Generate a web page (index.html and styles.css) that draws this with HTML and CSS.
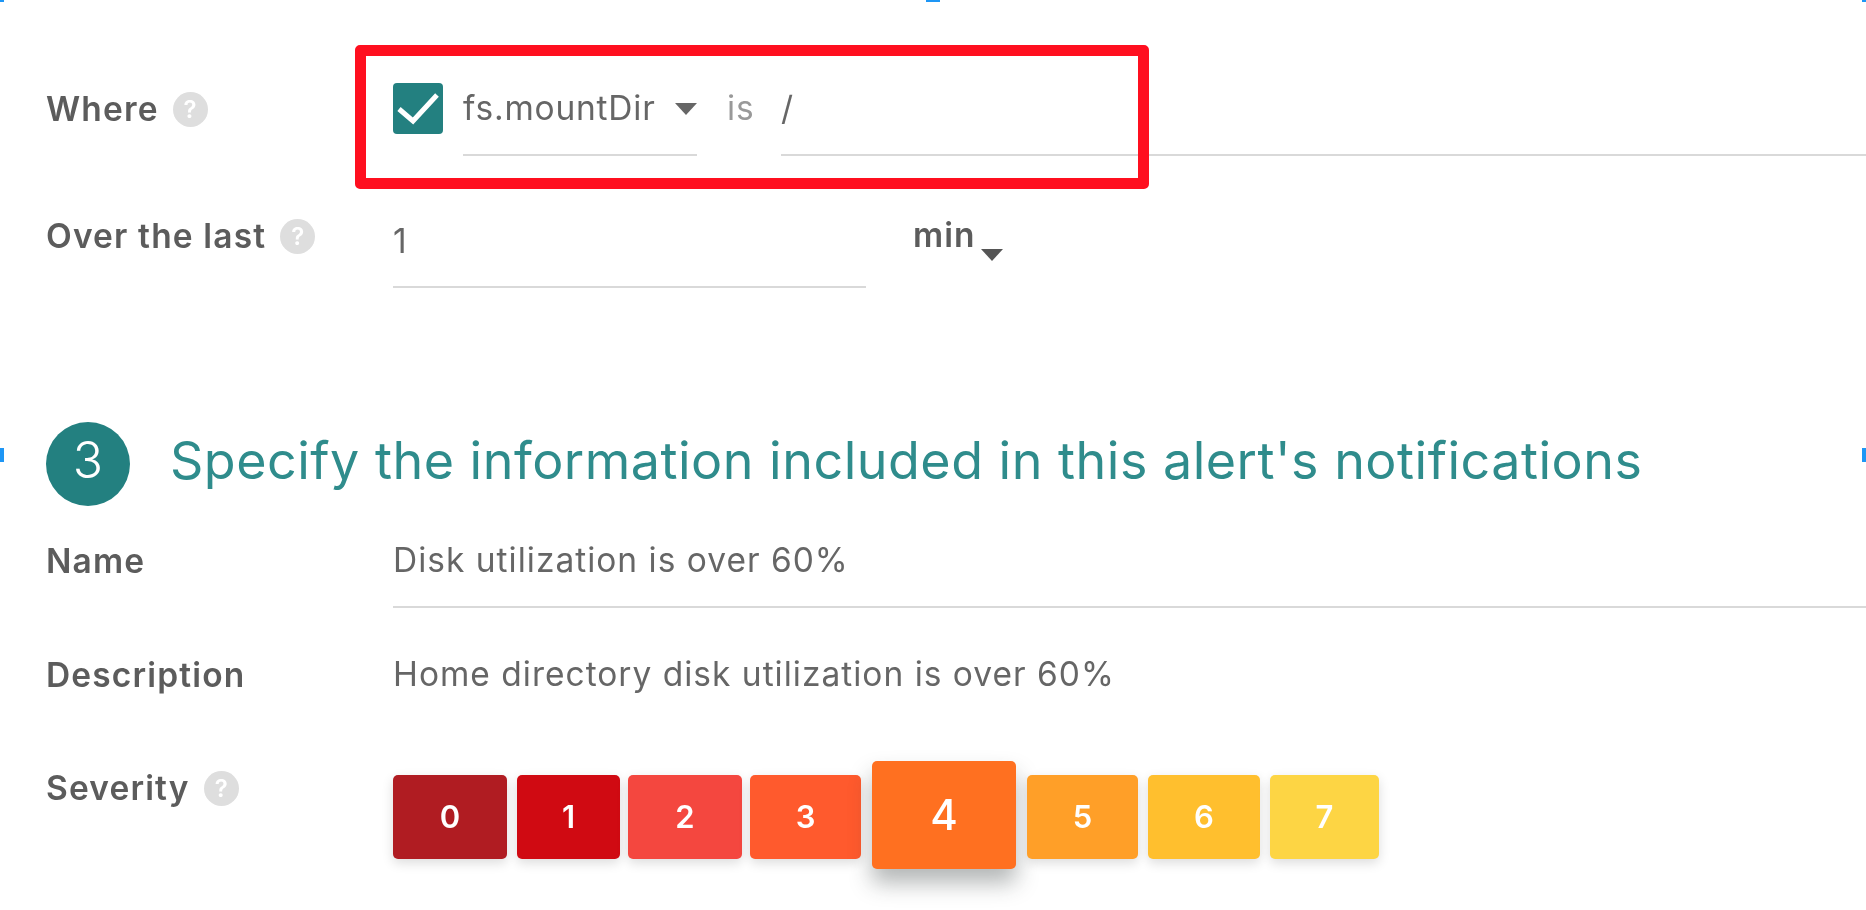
FILE: index.html
```html
<!DOCTYPE html>
<html lang="en">
<head>
<meta charset="utf-8">
<title>Alert form</title>
<link rel="stylesheet" href="styles.css">
</head>
<body>
<span class="handle handle-tl"></span>
<span class="handle handle-tc"></span>
<span class="handle handle-tr"></span>
<span class="handle handle-ml"></span>
<span class="handle handle-mr"></span>
<main class="page">
  <div class="row row-where">
    <div class="label">Where<span class="help">?</span></div>
    <div class="condition">
      <span class="checkbox">
        <svg viewBox="0 0 50 50" width="50" height="50"><path d="M6 26 L20 38 L44 12" fill="none" stroke="#fff" stroke-width="5"/></svg>
      </span>
      <div class="field field-key"><span>fs.mountDir</span><i class="caret caret-key"></i></div>
      <span class="op">is</span>
      <div class="field field-value">/</div>
    </div>
  </div>
  <div class="row row-over">
    <div class="label">Over the last<span class="help">?</span></div>
    <div class="field field-window">1</div>
    <div class="unit">min<i class="caret caret-unit"></i></div>
  </div>
  <div class="section">
    <span class="step">3</span>
    <h2 class="section-title">Specify the information included in this alert's notifications</h2>
  </div>
  <div class="row row-name">
    <div class="label">Name</div>
    <div class="field field-grow">Disk utilization is over 60%</div>
  </div>
  <div class="row row-desc">
    <div class="label">Description</div>
    <div class="plain">Home directory disk utilization is over 60%</div>
  </div>
  <div class="row row-sev">
    <div class="label">Severity<span class="help">?</span></div>
    <div class="severity">
      <span class="sev sev-0">0</span>
      <span class="sev sev-1">1</span>
      <span class="sev sev-2">2</span>
      <span class="sev sev-3">3</span>
      <span class="sev sev-4">4</span>
      <span class="sev sev-5">5</span>
      <span class="sev sev-6">6</span>
      <span class="sev sev-7">7</span>
    </div>
  </div>
</main>
<div class="highlight"></div>
</body>
</html>
```
FILE: styles.css
```css
* { box-sizing: border-box; }
html, body { margin: 0; height: 100%; overflow: hidden; background: #fff; }
body {
  position: relative;
  font-family: Inter, "Open Sans", sans-serif;
  font-size: 33.5px;
  letter-spacing: 1px;
  color: #666;
}
.page { padding: 88px 0 0 46px; filter: blur(.5px); }
.row { display: flex; align-items: flex-start; }
.label {
  flex: none;
  width: 347px;
  display: flex;
  align-items: center;
  height: 41px;
  padding-top: 1px;
  margin-bottom: -1px;
  font-weight: 600;
  letter-spacing: 1.15px;
  color: #5c5c5c;
}
.help {
  flex: none;
  width: 35px;
  height: 35px;
  margin-left: 14px;
  border-radius: 50%;
  background: #dedede;
  color: #fff;
  font-size: 24px;
  font-weight: 600;
  letter-spacing: 0;
  line-height: 35px;
  text-align: center;
}
.field {
  line-height: 40px;
  padding-bottom: 26px;
  border-bottom: 2px solid #d9d9d9;
}
.condition { flex: 1; display: flex; align-items: flex-start; }
.checkbox {
  flex: none;
  width: 50px;
  height: 51px;
  margin: -5px 20px 0 0;
  border-radius: 4px;
  background: #238080;
  display: flex;
}
.field-key { width: 234px; display: flex; letter-spacing: .8px; }
.field-key span { flex: 1; white-space: nowrap; }
.op { width: 84px; padding-left: 30px; line-height: 40px; color: #999; }
.field-value { flex: 1; }
.caret {
  display: block;
  flex: none;
  width: 0;
  height: 0;
  border-style: solid;
  border-width: 12px 11px 0;
  border-color: #666 transparent transparent;
}
.caret-key { margin-top: 15px; }
.row-over { margin-top: 59px; }
.field-window { width: 473px; margin-top: 6px; padding-bottom: 25px; }
.unit { display: flex; margin-left: 47px; line-height: 40px; font-weight: 600; color: #5c5c5c; }
.caret-unit { margin: 34px 0 0 6px; border-color: #555 transparent transparent; }
.section { display: flex; align-items: center; gap: 40px; margin-top: 134px; height: 84px; }
.step {
  flex: none;
  width: 84px;
  height: 84px;
  border-radius: 50%;
  background: #238080;
  color: #fff;
  font-size: 50px;
  font-weight: 300;
  letter-spacing: 0;
  line-height: 76px;
  text-align: center;
}
.section-title {
  margin: 0 0 8px;
  font-size: 52px;
  font-weight: 400;
  letter-spacing: .5px;
  color: #2f8c8c;
  white-space: nowrap;
}
.row-name { margin-top: 34px; }
.field-grow { flex: 1; }
.row-desc { margin-top: 46px; }
.plain { line-height: 40px; }
.row-sev { margin-top: 73px; }
.severity { display: flex; align-items: flex-start; margin-top: -6px; height: 108px; }
.sev {
  display: flex;
  align-items: center;
  justify-content: center;
  height: 84px;
  margin-top: 14px;
  padding-bottom: 2px;
  border-radius: 5px;
  color: #fff;
  font-size: 31px;
  font-weight: 600;
  letter-spacing: 0;
  box-shadow: 0 4px 12px rgba(0, 0, 0, .14);
}
.sev-0 { width: 114px; margin-right: 10px; background: #b01c22; }
.sev-1 { width: 103px; margin-right: 8px; background: #d00a12; }
.sev-2 { width: 114px; margin-right: 8px; background: #f4473f; }
.sev-3 { width: 111px; margin-right: 11px; background: #ff5a2d; }
.sev-4 {
  width: 144px;
  height: 108px;
  margin-top: 0;
  margin-right: 11px;
  background: #ff7020;
  font-size: 42px;
  font-weight: 500;
  box-shadow: 0 14px 22px rgba(40, 50, 50, .35);
}
.sev-5 { width: 111px; margin-right: 10px; background: #ff9f28; }
.sev-6 { width: 112px; margin-right: 10px; background: #ffbf2e; }
.sev-7 { width: 109px; background: #fdd544; }
.highlight {
  position: absolute;
  left: 355px;
  top: 45px;
  width: 794px;
  height: 144px;
  border: 11px solid #ff0f1f;
  border-radius: 5px;
}
.handle { position: absolute; background: #1e96f5; }
.handle-tl { left: 0; top: 0; width: 4px; height: 2px; }
.handle-tc { left: 926px; top: 0; width: 14px; height: 2px; }
.handle-tr { right: 0; top: 0; width: 4px; height: 2px; }
.handle-ml { left: 0; top: 448px; width: 4px; height: 14px; }
.handle-mr { right: 0; top: 448px; width: 4px; height: 14px; }
```
